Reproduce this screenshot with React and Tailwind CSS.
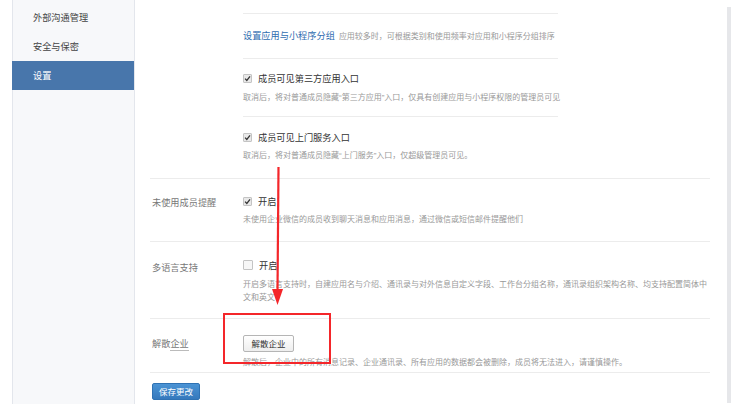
import React from "react";

const font = { fontFamily: '"Noto Sans CJK SC", "Noto Sans", sans-serif' };

function Q({ children }) {
  return <span style={{ fontFamily: '"Liberation Sans", sans-serif' }}>{children}</span>;
}

function Check({ checked }) {
  return checked ? (
    <span className="flex h-[9px] w-[9px] shrink-0 items-center justify-center rounded-[1px] border border-[#c4c4c4] bg-[#e9e9e9]">
      <svg width="7" height="7" viewBox="0 0 10 10">
        <path d="M1.5 5.2 L4 7.8 L8.6 2" fill="none" stroke="#333" strokeWidth="1.8" />
      </svg>
    </span>
  ) : (
    <span className="h-[10px] w-[10px] shrink-0 rounded-[1px] border border-[#c4c4c4] bg-[#f7f7f7]" />
  );
}

function CheckTitle({ checked, children }) {
  return (
    <div className="flex h-[14px] items-center gap-[6px]">
      <Check checked={checked} />
      <span className="text-[9.2px] leading-[14px] text-[#333]">{children}</span>
    </div>
  );
}

function Desc({ children, className = "" }) {
  return <div className={"text-[8px] leading-[13px] text-[#999] " + className}>{children}</div>;
}

export default function App() {
  return (
    <div className="relative h-[419px] w-[745px] overflow-hidden bg-white" style={font}>
      <div className="flex h-[404px]">
        {/* sidebar */}
        <div className="ml-[12px] h-full w-[123px] shrink-0 border-l border-r border-[#e3e6ec] bg-[#f7f8fa] pt-[3px]">
          <div className="flex h-[29px] items-center pl-[20px] text-[9.2px] text-[#444]">外部沟通管理</div>
          <div className="flex h-[29px] items-center pl-[20px] text-[9.2px] text-[#444]">安全与保密</div>
          <div className="-ml-px flex h-[29px] items-center bg-[#4876ab] pl-[21px] text-[9.2px] text-white">设置</div>
        </div>

        {/* main */}
        <div className="flex h-full flex-1 pl-[15px]">
          <div className="w-[560px]">
            {/* section A */}
            <div className="flex h-[179px] border-b border-[#ececec]">
              <div className="w-[93px] shrink-0" />
              <div className="w-[315px]">
                <div className="h-[14px] border-b border-[#ececec]" />
                <div className="flex h-[45px] items-center gap-[4px] border-b border-[#ececec]">
                  <span className="text-[9.2px] text-[#2f6db0]">设置应用与小程序分组</span>
                  <span className="text-[8px] text-[#999]">应用较多时，可根据类别和使用频率对应用和小程序分组排序</span>
                </div>
                <div className="h-[58px] border-b border-[#ececec] pt-[12px]">
                  <CheckTitle checked>成员可见第三方应用入口</CheckTitle>
                  <Desc className="mt-[5px] whitespace-nowrap">
                    取消后，将对普通成员隐藏<Q>“</Q>第三方应用<Q>”</Q>入口，仅具有创建应用与小程序权限的管理员可见
                  </Desc>
                </div>
                <div className="pt-[13px]">
                  <CheckTitle checked>成员可见上门服务入口</CheckTitle>
                  <Desc className="mt-[4px] whitespace-nowrap">
                    取消后，将对普通成员隐藏<Q>“</Q>上门服务<Q>”</Q>入口，仅超级管理员可见。
                  </Desc>
                </div>
              </div>
            </div>

            {/* section B */}
            <div className="flex h-[63px] border-b border-[#ececec]">
              <div className="w-[93px] shrink-0 pl-[2px] pt-[16px] text-[9.2px] leading-[14px] text-[#777]">未使用成员提醒</div>
              <div className="flex-1 pt-[15px]">
                <CheckTitle checked>开启</CheckTitle>
                <Desc className="mt-[4px]">未使用企业微信的成员收到聊天消息和应用消息，通过微信或短信邮件提醒他们</Desc>
              </div>
            </div>

            {/* section C */}
            <div className="flex h-[77px] border-b border-[#ececec]">
              <div className="w-[93px] shrink-0 pl-[2px] pt-[18px] text-[9.2px] leading-[14px] text-[#777]">多语言支持</div>
              <div className="flex-1 pt-[16px]">
                <CheckTitle checked={false}>开启</CheckTitle>
                <Desc className="mt-[5px] whitespace-nowrap">
                  开启多语言支持时，自建应用名与介绍、通讯录与对外信息自定义字段、工作台分组名称，通讯录组织架构名称、均支持配置简体中
                  <br />
                  文和英文
                </Desc>
              </div>
            </div>

            {/* section D */}
            <div className="flex h-[54px] border-b border-[#ececec]">
              <div className="w-[93px] shrink-0 pl-[2px] pt-[17px] text-[9.2px] leading-[14px] text-[#777]">
                解散<span className="border-b border-[#bbb]">企业</span>
              </div>
              <div className="flex-1 pt-[16px]">
                <button className="flex h-[17px] w-[51px] items-center justify-center rounded-[2px] border border-[#b5b5b5] bg-gradient-to-b from-white to-[#eeeeee] text-[8.5px] text-[#333]">
                  解散企业
                </button>
                <Desc className="mt-[3px] whitespace-nowrap">解散后，企业中的所有消息记录、企业通讯录、所有应用的数据都会被删除，成员将无法进入，请谨慎操作。</Desc>
              </div>
            </div>

            <div className="pl-[2px] pt-[10px]">
              <button className="flex h-[17px] w-[48px] items-center justify-center rounded-[2px] border border-[#2f72b3] bg-gradient-to-b from-[#4a93d4] to-[#3579bd] text-[8.5px] text-white">
                保存更改
              </button>
            </div>
          </div>
        </div>
      </div>

      {/* scrollbar strip */}
      <div className="absolute left-[727px] top-[7px] h-[396px] w-[4px] bg-[#e6e7ea]" />

      {/* red annotation box */}
      <div className="absolute left-[223px] top-[313px] h-[51px] w-[108px] border-2 border-[#f4262a]" />

      {/* red arrow */}
      <svg className="absolute left-0 top-0" width="745" height="419" viewBox="0 0 745 419">
        <line x1="278.5" y1="167" x2="277.5" y2="292" stroke="#f4262a" strokeWidth="2.2" />
        <polygon points="272,289 283,289 277.5,305" fill="#f4262a" />
      </svg>
    </div>
  );
}
